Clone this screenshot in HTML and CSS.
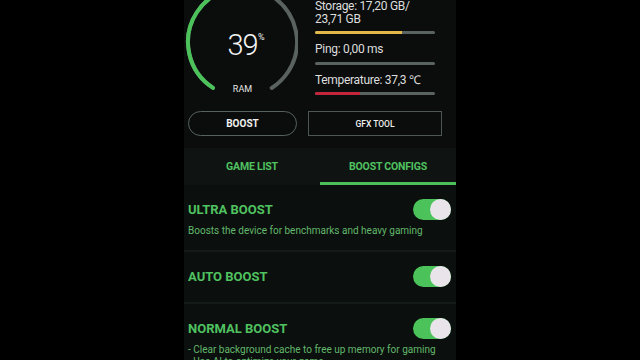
FILE: index.html
```html
<!DOCTYPE html>
<html lang="en">
<head>
<meta charset="UTF-8">
<meta name="viewport" content="width=device-width, initial-scale=1.0">
<title>Game Booster</title>
<link rel="stylesheet" href="styles.css">
</head>
<body>

<div class="screen">
    <section class="top">
        <div class="meters">
            <svg class="gauge" width="114" height="100" viewBox="0 0 114 100">
                <circle class="gauge-track" cx="58.5" cy="42" r="54.5" transform="rotate(122.8 58.5 42)"/>
                <circle class="gauge-fill" cx="58.5" cy="42" r="54.5" transform="rotate(122.8 58.5 42)"/>
                <text class="gauge-value" x="58.5" y="55">39</text>
                <text class="gauge-unit" x="74" y="40">%</text>
                <text class="gauge-label" x="58.5" y="92">RAM</text>
            </svg>
            <div class="stats">
                <div class="stat">
                    <div class="stat-text">Storage: 17,20 GB/ 23,71 GB</div>
                    <div class="bar"><span class="bar-fill storage" style="width: 72.5%"></span></div>
                </div>
                <div class="stat">
                    <div class="stat-text">Ping: 0,00 ms</div>
                    <div class="bar"><span class="bar-fill" style="width: 0%"></span></div>
                </div>
                <div class="stat">
                    <div class="stat-text">Temperature: 37,3 ℃</div>
                    <div class="bar"><span class="bar-fill temp" style="width: 37.5%"></span></div>
                </div>
            </div>
        </div>
        <div class="actions">
            <button class="btn btn-pill">BOOST</button>
            <button class="btn btn-box">GFX TOOL</button>
        </div>
    </section>

    <nav class="tabs">
        <div class="tab">GAME LIST</div>
        <div class="tab active">BOOST CONFIGS</div>
    </nav>

    <div class="configs">
        <div class="card">
            <div class="card-head">
                <div class="card-title">ULTRA BOOST</div>
                <div class="switch on"><span class="knob"></span></div>
            </div>
            <div class="card-desc">Boosts the device for benchmarks and heavy gaming</div>
        </div>
        <div class="card plain">
            <div class="card-head">
                <div class="card-title">AUTO BOOST</div>
                <div class="switch on"><span class="knob"></span></div>
            </div>
        </div>
        <div class="card">
            <div class="card-head">
                <div class="card-title">NORMAL BOOST</div>
                <div class="switch on"><span class="knob"></span></div>
            </div>
            <div class="card-desc">
                - Clear background cache to free up memory for gaming<br>
                - Use AI to optimize your game
            </div>
        </div>
    </div>
</div>

</body>
</html>
```

FILE: styles.css
```css
body {
    margin: 0;
    background-color: #000;
    font-family: Roboto, "Liberation Sans", sans-serif;
}
.screen {
    width: 272px;
    height: 360px;
    margin: 0 auto;
    overflow: hidden;
    background-color: #141a17;
}
.top {
    background-color: #0a0d0c;
    padding-bottom: 12px;
}
.meters {
    display: flex;
    gap: 17px;
    height: 100px;
}
.gauge {
    display: block;
    flex: none;
}
.gauge-track,
.gauge-fill {
    fill: none;
    stroke-width: 4;
    stroke-linecap: round;
}
.gauge-track {
    stroke: #59625f;
    stroke-dasharray: 280 342.4;
}
.gauge-fill {
    stroke: #4cc35a;
    stroke-dasharray: 109 342.4;
}
.gauge-value {
    fill: #f2f2f2;
    font-size: 29px;
    font-weight: 300;
    letter-spacing: -1px;
    text-anchor: middle;
}
.gauge-unit {
    fill: #f2f2f2;
    font-size: 9px;
}
.gauge-label {
    fill: #e6e6e6;
    font-size: 9px;
    text-anchor: middle;
}
.stats {
    width: 120px;
}
.stat {
    margin-bottom: 9px;
}
.stat:last-child {
    margin-bottom: 0;
}
.stat-text {
    color: #dedede;
    font-size: 12px;
    line-height: 12.5px;
    letter-spacing: -0.3px;
}
.bar {
    height: 3px;
    margin-top: 6px;
    border-radius: 2px;
    background-color: #5a6360;
    overflow: hidden;
}
.bar-fill {
    display: block;
    height: 100%;
}
.bar-fill.storage {
    background-color: #e2b84b;
}
.bar-fill.temp {
    background-color: #c3253d;
}
.actions {
    display: flex;
    gap: 11px;
    margin: 11px 0 0 4px;
}
.btn {
    height: 25px;
    padding: 0;
    background: none;
    color: #f0f0f0;
    font-family: Roboto, "Liberation Sans", sans-serif;
    cursor: pointer;
}
.btn-pill {
    width: 109px;
    border: 1.5px solid #56625d;
    border-radius: 13px;
    font-size: 10px;
    font-weight: 700;
}
.btn-box {
    width: 134px;
    border: 1px solid #4d5753;
    font-size: 8.5px;
    font-weight: 500;
}
.tabs {
    display: flex;
    height: 37px;
    background-color: #0f1412;
}
.tab {
    flex: 1;
    display: flex;
    align-items: center;
    justify-content: center;
    padding-top: 3px;
    box-sizing: border-box;
    border-bottom: 3px solid transparent;
    color: #50c260;
    font-size: 10.5px;
    font-weight: 700;
    letter-spacing: -0.2px;
}
.tab.active {
    border-bottom-color: #4bbf5a;
}
.configs {
    display: flex;
    flex-direction: column;
    gap: 2px;
}
.card {
    background-color: #0b0f0d;
    padding: 14px 5px 13px 4px;
}
.card.plain {
    padding-bottom: 15px;
}
.card-head {
    display: flex;
    align-items: center;
    justify-content: space-between;
    height: 21px;
}
.card-title {
    color: #50c260;
    font-size: 13px;
    font-weight: 700;
    line-height: 16px;
}
.card-desc {
    margin-top: 5px;
    color: #62b86c;
    font-size: 10px;
    line-height: 12px;
}
.switch {
    width: 38px;
    height: 21px;
    border-radius: 11px;
    background-color: #4cc35a;
    display: flex;
    justify-content: flex-end;
}
.knob {
    width: 21px;
    height: 21px;
    border-radius: 50%;
    background-color: #e8e4ea;
}
```
